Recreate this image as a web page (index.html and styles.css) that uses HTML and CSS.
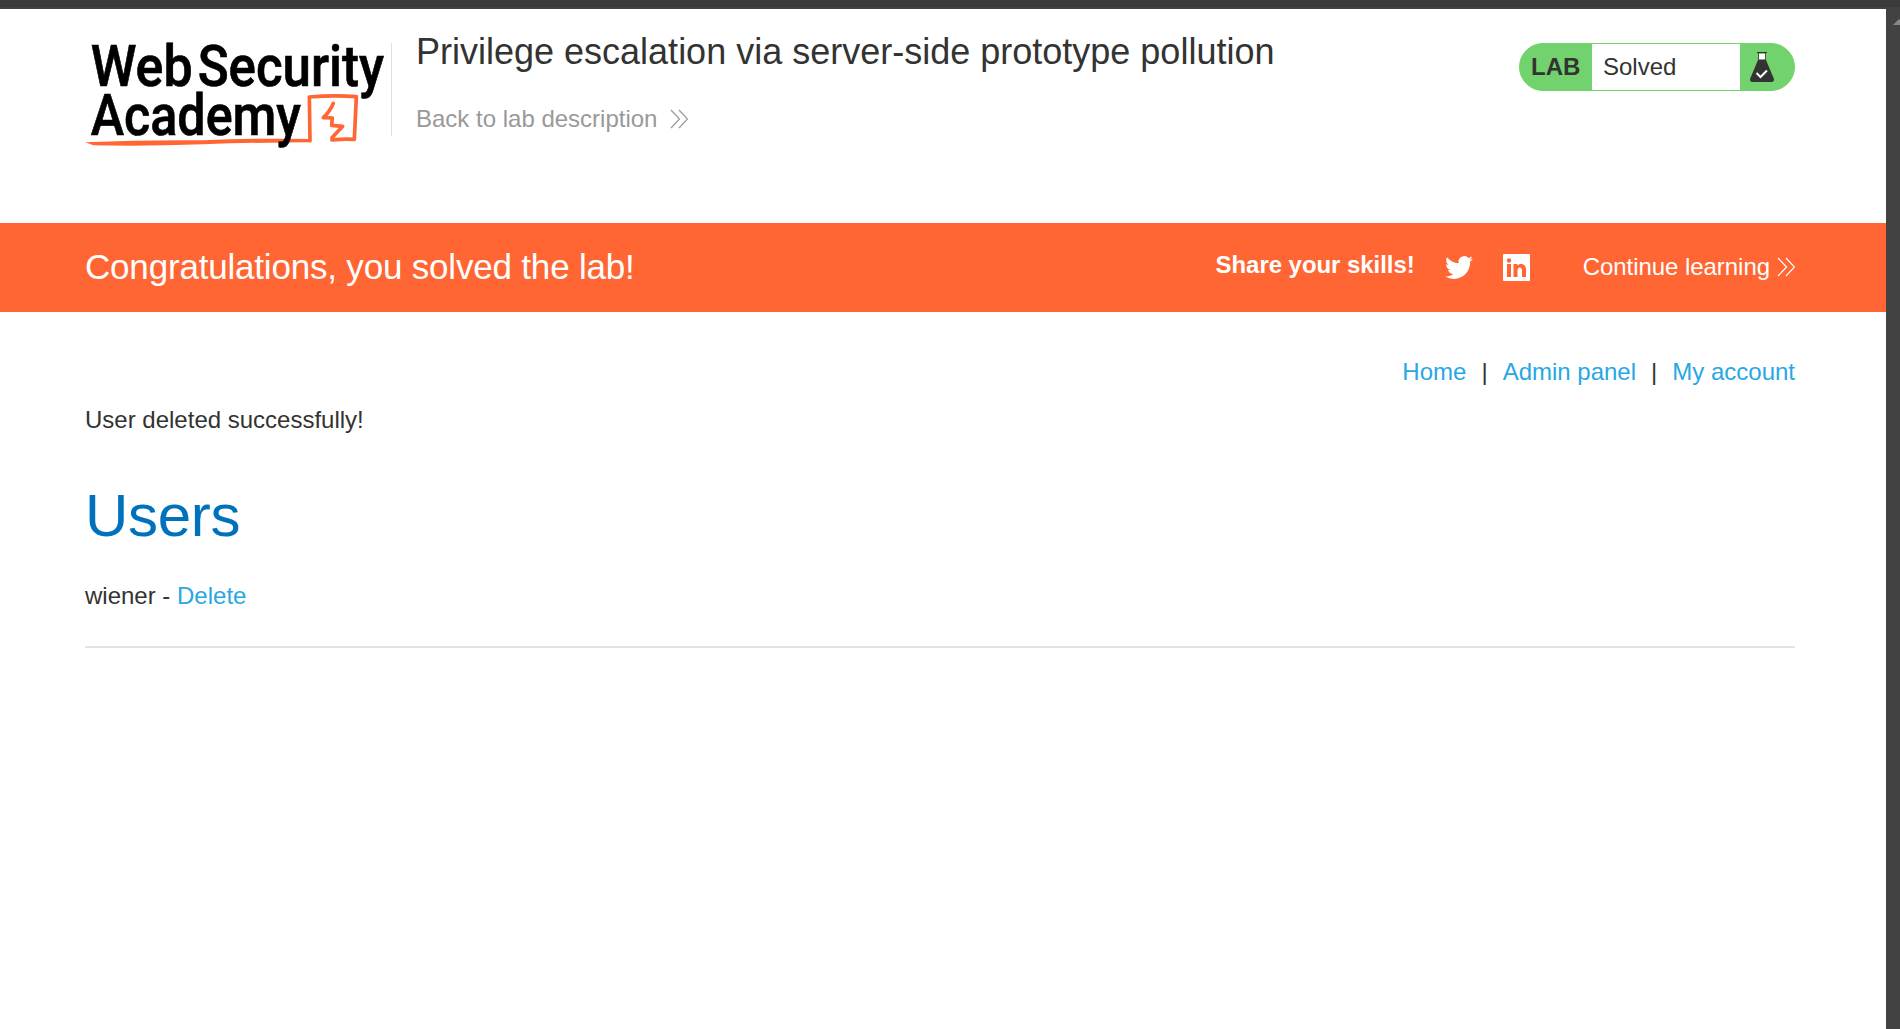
FILE: index.html
```html
<!DOCTYPE html>
<html lang="en">
<head>
<meta charset="utf-8">
<title>Privilege escalation via server-side prototype pollution</title>
<link rel="stylesheet" href="styles.css">
</head>
<body>
<div class="window-edge"></div>
<div class="viewport">
  <div class="page">
    <header class="lab-header">
      <svg class="logo" viewBox="45 0 915 390" role="img" aria-label="Web Security Academy">
        <g class="logo-mark">
          <path stroke-width="11" d="M720 332L718 201Q790 195 859 200L853 328Q820 326 786 330L786 323L818 289L785 286L787 264L760 263Q779 246 790 220"/>
          <path class="logo-line" d="M46 337Q230 329 400 331Q560 324 722 327V337Q560 337 400 343Q230 349 70 346Z"/>
        </g>
        <g class="logo-text">
          <text x="62" y="168" textLength="306" lengthAdjust="spacingAndGlyphs">Web</text>
          <text x="383" y="168" textLength="559" lengthAdjust="spacingAndGlyphs">Security</text>
          <text x="62" y="315" textLength="631" lengthAdjust="spacingAndGlyphs">Academy</text>
        </g>
      </svg>
      <div class="title-box">
        <h2 class="title">Privilege escalation via server-side prototype pollution</h2>
        <a class="back">Back to lab description
          <svg class="chevrons" viewBox="0 0 18 20"><path d="M1 1L9.500 10L1 19M9 1L17.500 10L9 19"/></svg>
        </a>
      </div>
      <div class="badge">
        <span class="badge-lab">LAB</span>
        <span class="badge-state">Solved</span>
        <svg class="flask" viewBox="0 0 24 30"><path fill="#fff" d="M8.500 1.500V8H15.500V1.500Z"/><path d="M7 0H17V1H16V8L24 27Q24 30 22 30H2Q0 30 0 27L8 8V1H7ZM8.800 1.200V7.500H15.200V1.200Z" fill-rule="evenodd"/><path class="tick" d="M6.500 21L10.500 25L17 18.500"/></svg>
      </div>
    </header>
    <section class="banner">
      <h3 class="banner-title">Congratulations, you solved the lab!</h3>
      <span class="share">Share your skills!</span>
      <svg class="twitter" viewBox="0 2 24 20"><path d="M23.950 4.570a10 10 0 0 1-2.820.770 4.960 4.960 0 0 0 2.160-2.720c-.950.560-2 .960-3.130 1.180a4.920 4.920 0 0 0-8.380 4.480C7.690 8.100 4.070 6.130 1.640 3.160a4.820 4.820 0 0 0-.670 2.480c0 1.710.870 3.210 2.190 4.100a4.900 4.900 0 0 1-2.230-.620v.060a4.920 4.920 0 0 0 3.950 4.830 5 5 0 0 1-2.210.080 4.940 4.940 0 0 0 4.600 3.420A9.870 9.870 0 0 1 0 19.540a13.990 13.990 0 0 0 7.560 2.210c9.050 0 14-7.500 14-13.980l-.020-.640a9.940 9.940 0 0 0 2.410-2.560z"/></svg>
      <svg class="linkedin" viewBox="0 0 27 27"><path fill-rule="evenodd" d="M1 0H26Q27 0 27 1V26Q27 27 26 27H1Q0 27 0 26V1Q0 0 1 0ZM4 10V23H8V10ZM6 4.300A2.200 2.200 0 1 0 6 8.700A2.200 2.200 0 1 0 6 4.300ZM10.500 10V23H14.500V16.500C14.500 12.500 19 12.400 19 16.500V23H23V15.500C23 9.500 16.500 8.500 14.400 11.800V10Z"/></svg>
      <a class="continue">Continue learning
        <svg class="chevrons" viewBox="0 0 18 20"><path d="M1 1L9.500 10L1 19M9 1L17.500 10L9 19"/></svg>
      </a>
    </section>
    <main class="content">
      <nav class="links"><a>Home</a><span>|</span><a>Admin panel</a><span>|</span><a>My account</a></nav>
      <p class="message">User deleted successfully!</p>
      <h1 class="heading">Users</h1>
      <div class="user">wiener - <a>Delete</a></div>
      <hr class="rule">
    </main>
  </div>
  <div class="scrollbar"><svg class="scroll-arrow" viewBox="0 0 7 6"><path d="M0 6L6 0L12 6Z"/></svg></div>
</div>
</body>
</html>
```
FILE: styles.css
```css
* { box-sizing: border-box; margin: 0; padding: 0; }
body {
  height: 1029px;
  overflow: hidden;
  background: #fff;
  color: #333332;
  font: 24px/36px "Liberation Sans", Arial, sans-serif;
}
.window-edge { height: 9px; background: #3b3b3b; border-bottom: 2px solid #424242; }
.viewport { display: flex; height: 1020px; }
.page { flex: 1; }
.scrollbar { width: 14px; padding: 10px 0 0 7px; background: #424242; }
.scroll-arrow { display: block; width: 7px; height: 6px; fill: #888; }

.lab-header { display: flex; align-items: flex-start; height: 214px; padding: 21px 91px 0 85px; }
.logo { width: 305px; height: 130px; flex: none; overflow: visible; }
.logo-text { font: 500 171px Roboto, sans-serif; fill: #000; stroke: #000; stroke-width: 2; }
.logo-mark { fill: none; stroke: #ff6633; stroke-linejoin: round; stroke-linecap: round; }
.logo-mark .logo-line { fill: #ff6633; stroke: none; }
.title-box { height: 93px; margin: 13px 0 0 1px; padding-left: 24px; border-left: 1px solid #e0e0e0; }
.title { margin-top: -13px; font-size: 36px; line-height: 44px; font-weight: 400; white-space: nowrap; }
.back { display: flex; align-items: center; gap: 13px; margin-top: 27px; color: #999; }
.chevrons { width: 18px; height: 20px; fill: none; stroke: currentColor; stroke-width: 1.200; }
.badge {
  display: flex;
  align-items: center;
  width: 276px;
  height: 48px;
  margin: 13px 0 0 auto;
  border: 1px solid #72d26e;
  border-radius: 24px;
  background: #72d26e;
}
.badge-lab { width: 72px; padding-left: 11px; font-weight: 700; }
.badge-state { width: 148px; height: 46px; padding-left: 11px; line-height: 46px; background: #fff; }
.flask { width: 24px; height: 30px; margin-left: 10px; fill: #333332; }
.flask .tick { fill: none; stroke: #fff; stroke-width: 2; }

.banner { display: flex; align-items: center; height: 89px; padding: 0 91px 1px 85px; background: #ff6633; color: #fff; }
.banner-title { margin-right: auto; font-size: 35px; line-height: 44px; font-weight: 400; letter-spacing: -0.190px; }
.share { margin: -4px 30px 0 0; font-weight: 700; letter-spacing: -0.050px; }
.twitter { width: 28px; height: 25px; margin-right: 30px; fill: #fff; }
.linkedin { width: 27px; height: 27px; margin-right: 53px; fill: #fff; }
.continue { display: flex; align-items: center; gap: 7px; letter-spacing: -0.050px; }

.content { padding: 42px 91px 0 85px; }
.links { display: flex; justify-content: flex-end; gap: 15px; }
a { text-decoration: none; }
.links a, .user a { color: #29a7e5; }
.message { margin-top: 12px; }
.heading { margin-top: 38px; color: #0071bc; font-size: 60px; line-height: 80px; font-weight: 400; letter-spacing: -0.300px; }
.user { margin-top: 22px; }
.rule { margin-top: 32px; border: 0; height: 2px; background: #e4e4e4; }
```
